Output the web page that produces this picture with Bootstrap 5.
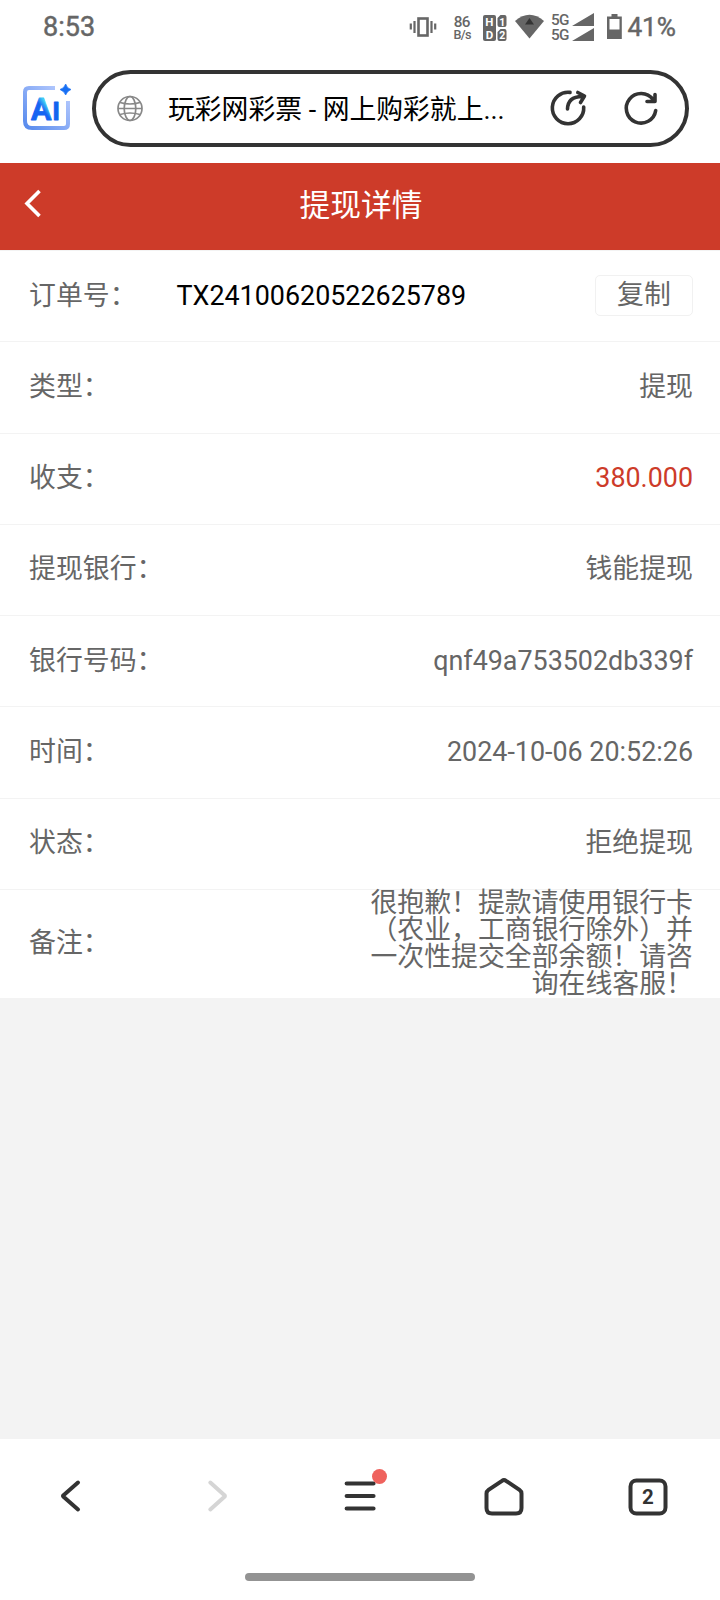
<!DOCTYPE html>
<html lang="zh-CN">
<head>
<meta charset="utf-8">
<meta name="viewport" content="width=device-width, initial-scale=1">
<title>提现详情</title>
<link href="https://cdn.jsdelivr.net/npm/bootstrap@5.3.0/dist/css/bootstrap.min.css" rel="stylesheet">
<style>
body{font-family:Roboto,"Noto Sans CJK SC",sans-serif;background:#f3f3f3;color:#666;width:720px;height:1600px;overflow:hidden}
svg{display:block;flex:none}
svg text{font-family:Roboto,sans-serif}
.status-bar{height:56px;padding:0 44px 0 43px;font-size:27px;line-height:55px;-webkit-text-stroke:.45px #666}
.status-bar svg{-webkit-text-stroke:0}
.battery-level{margin-left:2px;font-size:26.2px}
.address-area{height:107px;padding:14px 31px 16px 20px}
.address-pill{width:597px;height:77px;border:4px solid #333;border-radius:39px;padding:0 20px 0 20px;color:#000;font-size:26.8px}
.page-title{width:336px;margin-left:24px;padding-top:4px}
.title-bar{height:87px;background:#cd3b29;color:#fff;font-size:30.7px;line-height:86px}
.title-side{width:60px}
.title-text{padding-left:2px}
.detail-list{border-top:1px solid #f3f3f3}
.detail-row{height:91.25px;border:0;border-bottom:1.5px solid #f3f3f3;border-radius:0;padding:0 27px 0 29px;color:#666;font-size:26.88px;line-height:27px;background:#fff}
.detail-row.remark-row{height:108.25px;border-bottom:0}
.remark-text{width:323px;line-height:27px}
.order-no{color:#000;margin-left:40px}
.copy-btn{width:98px;height:41px;border:1.5px solid #f1f1f1;border-radius:5px;color:#666;font-size:26.88px;line-height:27px;padding:0;margin-bottom:2px}
.amount{color:#cd3b29}
.tool-bar{height:161px}
.tool-icons{height:114px}
.gesture{width:230px;height:8px;background:#939393;margin-top:20px}
</style>
</head>
<body class="d-flex flex-column">
<header class="bg-white">
  <div class="status-bar d-flex justify-content-between">
    <span class="clock">8:53</span>
    <div class="d-flex">
      <svg width="218" height="56" viewBox="408 0 218 56" fill="#666">
        <rect x="419.5" y="18.5" width="9" height="17" fill="none" stroke="#666" stroke-width="2.6"/>
        <path d="M411.800 23.500v6M415.500 21v12M432.500 21v12M436.200 23.500v6" stroke="#666" stroke-width="2.200"/>
        <text x="454.700" y="27" font-size="15.300" font-weight="500" textLength="16.800">86</text>
        <text x="454.500" y="39.200" font-size="12.600" font-weight="500" textLength="18">B/s</text>
        <path d="M486 15h9q2 0 2 2v22q0 2-2 2h-9q-2 0-2-2v-22q0-2 2-2z"/>
        <path d="M501.500 15h4q2 0 2 2v8q0 2-2 2h-5q-2 0-2-2v-7zM501.500 29h4q2 0 2 2v8q0 2-2 2h-5q-2 0-2-2v-7z"/>
        <g fill="#fff" font-weight="700"><text x="486.300" y="25.500" font-size="11.500">H</text><text x="486.700" y="38.500" font-size="11.500">D</text><text x="500.200" y="25.500" font-size="10.500">1</text><text x="500.200" y="39" font-size="10.500">2</text></g>
        <path d="M516 21Q530.500 8.500 545 21L530.500 38.500Z"/><path d="M530.500 18l4.500 6.500h-9z" fill="#333"/>
        <text x="552" y="25.300" font-size="15.300" font-weight="500" textLength="18.500">5G</text>
        <text x="552" y="40.300" font-size="15.300" font-weight="500" textLength="18.500">5G</text>
        <path d="M573 26L595 13V26ZM573 41L595 28V41Z"/>
        <path fill-rule="evenodd" d="M612.500 14h6v2.500h4.300v22.500h-14.800v-22.500h4.500zM610.500 19v10.500h10v-10.500z"/>
      </svg>
      <span class="battery-level">41%</span>
    </div>
  </div>
  <div class="address-area d-flex justify-content-between">
    <svg width="54" height="77" viewBox="20 70 54 77">
      <defs>
        <linearGradient id="frame" x1="0" y1="1" x2="1" y2="0"><stop stop-color="#578aed"/><stop offset="1" stop-color="#bdcfff"/></linearGradient>
        <linearGradient id="letter" x1="0.2" x2=".8" y1=".8" y2="0.1"><stop offset=".5" stop-color="#1764f2"/><stop offset=".75" stop-color="#42d2f5"/><stop offset=".9" stop-color="#1763ef"/></linearGradient>
      </defs>
      <path d="M55 88H29q-4 0-4 4v29q0 7 7 7h32q4 0 4-4V101" fill="none" stroke="url(#frame)" stroke-width="4"/>
      <text x="31" y="119.500" font-size="30.500" font-weight="700" fill="url(#letter)" stroke="url(#letter)" stroke-width=".8" stroke-linejoin="round">A</text>
      <text x="52.200" y="119.500" font-size="26.500" font-weight="700" fill="#1463ef" stroke="#1463ef" stroke-width=".8" stroke-linejoin="round">I</text>
      <path d="M65.700 84Q67 88.500 71 89.500Q67 91 65.700 95Q64 91 60 89.500Q64 88.500 65.700 84Z" fill="#176ff4" stroke="#176ff4" stroke-width=".7"/>
    </svg>
    <div class="address-pill d-flex align-items-center">
      <svg width="28" height="28" viewBox="-14 -13.500 28 28" fill="none" stroke="#888" stroke-width="1.700"><circle r="12"/><ellipse rx="5.800" ry="12"/><path d="M-12 0H12M-10 -6Q0-3 10-6M-10 6Q0 3 10 6"/></svg>
      <div class="page-title text-nowrap">玩彩网彩票 - 网上购彩就上...</div>
      <svg class="ms-auto" width="120" height="44" viewBox="545 87 120 44" fill="none" stroke="#333" stroke-width="3.600" stroke-linecap="round" stroke-linejoin="round">
        <path d="M570 92.400A15.700 15.700 0 1 0 583.700 107"/><path d="M567.500 109Q568 96 583 96.500M577.800 92.500L584.500 96L580.500 102.500"/>
        <path d="M655.700 110.500A14.800 14.800 0 1 1 653 99.500M655 94.500V101.500H647"/>
      </svg>
    </div>
  </div>
</header>
<nav class="title-bar d-flex justify-content-between">
  <a class="title-side" href="#" aria-label="返回"><svg width="60" height="87" viewBox="0 163 60 87" fill="none" stroke="#fff" stroke-width="3.600"><path d="M39.500 191L27 203.500L39.500 216"/></svg></a>
  <span class="title-text">提现详情</span><span class="title-side"></span>
</nav>
<main class="flex-grow-1">
  <div class="detail-list list-group list-group-flush">
    <div class="detail-row list-group-item d-flex align-items-center"><span>订单号：</span><span class="order-no">TX24100620522625789</span><button class="copy-btn btn bg-white ms-auto">复制</button></div>
    <div class="detail-row list-group-item d-flex align-items-center justify-content-between"><span>类型：</span><span>提现</span></div>
    <div class="detail-row list-group-item d-flex align-items-center justify-content-between"><span>收支：</span><span class="amount">380.000</span></div>
    <div class="detail-row list-group-item d-flex align-items-center justify-content-between"><span>提现银行：</span><span>钱能提现</span></div>
    <div class="detail-row list-group-item d-flex align-items-center justify-content-between"><span>银行号码：</span><span>qnf49a753502db339f</span></div>
    <div class="detail-row list-group-item d-flex align-items-center justify-content-between"><span>时间：</span><span>2024-10-06 20:52:26</span></div>
    <div class="detail-row list-group-item d-flex align-items-center justify-content-between"><span>状态：</span><span>拒绝提现</span></div>
    <div class="detail-row remark-row list-group-item d-flex align-items-center justify-content-between"><span>备注：</span><span class="remark-text text-end">很抱歉！提款请使用银行卡（农业，工商银行除外）并一次性提交全部余额！请咨询在线客服！</span></div>
  </div>
</main>
<footer class="tool-bar bg-white">
  <div class="tool-icons row g-0 align-items-center">
    <div class="col"><svg class="mx-auto" width="60" height="60" fill="none" stroke="#333" stroke-width="4" stroke-linecap="round" stroke-linejoin="round"><path d="M36 16.500L21.500 29.200Q20.700 30 21.500 30.800L36 43.500"/></svg></div>
    <div class="col"><svg class="mx-auto" width="60" height="60" fill="none" stroke="#d5d5d5" stroke-width="4" stroke-linecap="round" stroke-linejoin="round"><path d="M24.300 16.500L38.500 29.200Q39.300 30 38.500 30.800L24.300 43.500"/></svg></div>
    <div class="col"><svg class="mx-auto" width="60" height="60" stroke="#333" stroke-width="4.200" stroke-linecap="round"><path d="M16.700 17.500H43.500M16.700 30H43.500M16.700 42.500H43.500"/><circle cx="49.500" cy="10.500" r="7.500" fill="#ef625d" stroke="none"/></svg></div>
    <div class="col"><svg class="mx-auto" width="60" height="60" fill="none" stroke="#333" stroke-width="4"><path d="M28 14.800Q30 13.300 32 14.800L45.500 23.800Q47.500 25.200 47.500 27.500V42Q47.500 47.500 42 47.500H18Q12.500 47.500 12.500 42V27.500Q12.500 25.200 14.500 23.800Z"/></svg></div>
    <div class="col"><svg class="mx-auto" width="60" height="60"><rect x="12.500" y="14.500" width="35" height="33" rx="6" fill="none" stroke="#333" stroke-width="4"/><text x="30" y="38" text-anchor="middle" font-size="20.500" font-weight="700" fill="#333">2</text></svg></div>
  </div>
  <div class="gesture rounded-pill mx-auto"></div>
</footer>
<script src="https://cdn.jsdelivr.net/npm/bootstrap@5.3.0/dist/js/bootstrap.bundle.min.js"></script>
</body>
</html>
